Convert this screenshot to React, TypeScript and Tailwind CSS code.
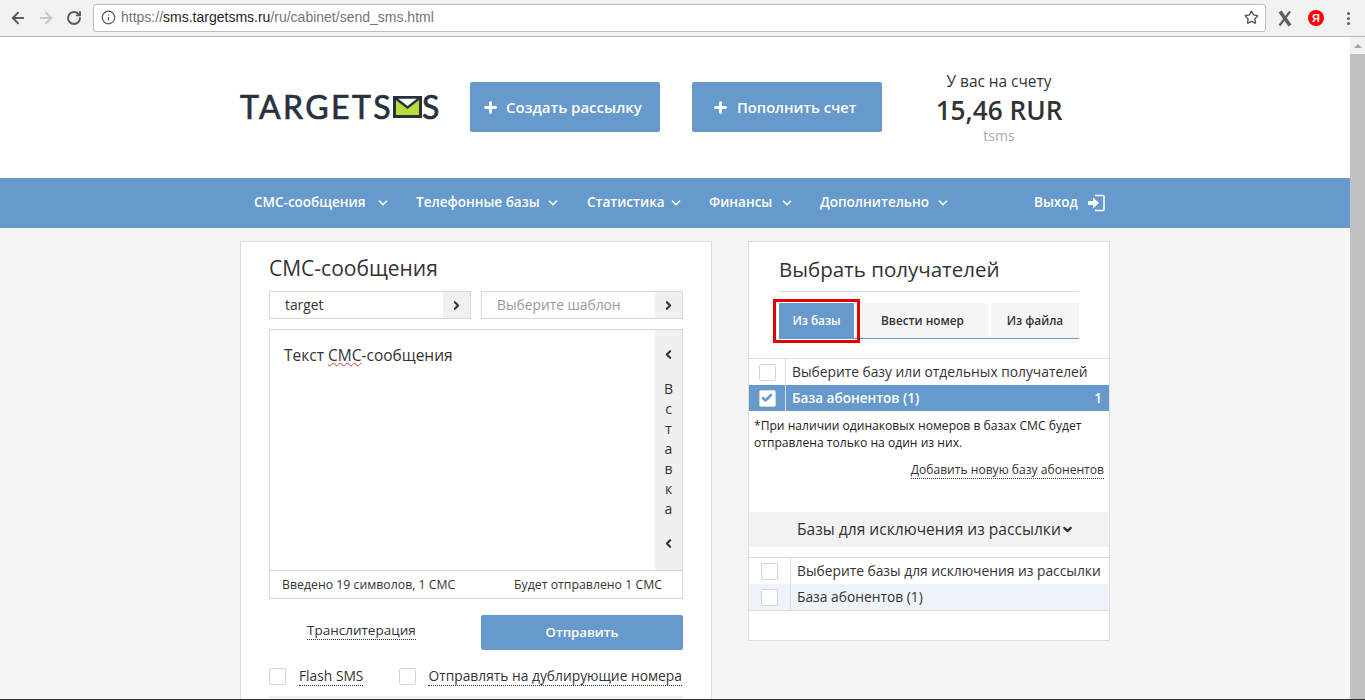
import React from 'react';
import { ArrowLeft, ArrowRight, RotateCw, Info, Star, Plus, ChevronDown, ChevronRight, ChevronLeft, Check } from 'lucide-react';

const BLUE = 'bg-[#6699cc]';

const NavItem = ({ label, className, textWidth }: any) => (
  <div className={`flex items-center ${className}`}>
    <span className={`font-semibold whitespace-nowrap ${textWidth}`}>{label}</span>
    <ChevronDown className="w-[14px] h-[14px] ml-[9px] mt-[2px]" strokeWidth={3} />
  </div>
);

const Box = ({ checked, className = '' }: any) => (
  <div className={`w-[17px] h-[17px] shrink-0 bg-white border border-[#d5d5d5] rounded-[2px] flex items-center justify-center ${className}`}>
    {checked && <Check className="w-[12px] h-[12px] text-[#6699cc]" strokeWidth={5} />}
  </div>
);

const Picker = ({ label, muted, className }: any) => (
  <div className={`h-[28px] border border-[#d8d8d8] flex items-stretch ${className}`}>
    <div className={`flex-1 pl-[15px] leading-[26px] text-[13.8px] ${muted ? 'text-[#999]' : 'text-[#333]'}`}>{label}</div>
    <div className="w-[27px] bg-[#f0f0f0] flex items-center justify-center">
      <ChevronRight className="w-[13px] h-[13px] text-[#333]" strokeWidth={4} />
    </div>
  </div>
);

const DbRow = ({ label, count, checked, tint, lineLeft }: any) => (
  <div className={`h-[26px] flex items-center ${checked ? `${BLUE} text-white font-semibold text-[13.5px]` : tint ? 'bg-[#eef3fa] text-[#333] text-[13.8px]' : 'text-[#333] text-[13.8px]'}`}>
    <div className={`${lineLeft} h-full flex items-center justify-center border-r ${checked ? 'border-[#d5e2f0]' : 'border-[#ddd]'}`}>
      <Box checked={checked} />
    </div>
    <span className="pl-[6px] flex-1 whitespace-nowrap">{label}</span>
    {count && <span className="pr-[7px]">{count}</span>}
  </div>
);

export default function App() {
  return (
    <div className="w-[1365px] h-[700px] overflow-hidden flex flex-col bg-white font-['Open_Sans',sans-serif] text-[#333]">
      {/* Browser toolbar */}
      <div className="h-[37px] shrink-0 bg-[#f2f2f2] border-b border-[#b8b8b8] flex items-center pl-[9px]">
        <ArrowLeft className="w-[18px] h-[18px] text-[#5a5a5a]" strokeWidth={2.5} />
        <ArrowRight className="w-[18px] h-[18px] ml-[10px] text-[#c8c8c8]" strokeWidth={2.5} />
        <RotateCw className="w-[16px] h-[16px] ml-[11px] text-[#5a5a5a]" strokeWidth={2.8} />
        <div className="ml-[11px] w-[1173px] h-[28px] -mt-px bg-white border border-[#bdbdbd] rounded-[3px] flex items-center pl-[7px] pr-[6px] font-['Liberation_Sans',sans-serif] text-[14px]">
          <Info className="w-[15px] h-[15px] text-[#555]" strokeWidth={2} />
          <span className="ml-[5px] text-[#757575]">https://</span>
          <span className="text-[#222]">sms.targetsms.ru</span>
          <span className="text-[#757575]">/ru/cabinet/send_sms.html</span>
          <Star className="w-[15px] h-[15px] ml-auto text-[#555]" strokeWidth={2.2} />
        </div>
        <svg className="ml-[11px]" width="16" height="17" viewBox="0 0 16 17" fill="none">
          <path d="M3 1.500L13 15.500" stroke="#5f5f5f" strokeWidth="3.600" />
          <path d="M13 1.500L2.500 15.500" stroke="#5f5f5f" strokeWidth="2.200" />
        </svg>
        <div className="ml-[15px] w-[16px] h-[16px] rounded-full bg-[#ff0000] text-white text-[11px] font-bold flex items-center justify-center font-['Liberation_Sans',sans-serif]">Я</div>
        <div className="ml-[23px] flex flex-col gap-[2px]">
          <div className="w-[3px] h-[3px] rounded-full bg-[#5f5f5f]" />
          <div className="w-[3px] h-[3px] rounded-full bg-[#5f5f5f]" />
          <div className="w-[3px] h-[3px] rounded-full bg-[#5f5f5f]" />
        </div>
      </div>

      <div className="flex-1 flex min-h-0">
        <div className="w-[1350px] shrink-0 flex flex-col bg-[#f5f5f5]">
          {/* Header */}
          <div className="h-[141px] shrink-0 bg-white pl-[240px] flex">
            <div className="w-[230px] h-full flex items-start pt-[52px]">
              <span className="font-['Lato',sans-serif] text-[32px] leading-[36px] tracking-[2.4px] text-[#26323f] [-webkit-text-stroke:0.7px_#26323f]">TARGETS</span>
              <svg className="mt-[7px] shrink-0" width="29" height="22" viewBox="0 0 29 22">
                <rect x="1.500" y="1.500" width="26" height="19" fill="#b9dc3a" stroke="#26323f" strokeWidth="3" />
                <path d="M1.500 1.500l13 10 13-10z" fill="#fff" stroke="#26323f" strokeWidth="2.400" />
              </svg>
              <span className="font-['Lato',sans-serif] text-[32px] leading-[36px] text-[#26323f] [-webkit-text-stroke:0.7px_#26323f]">S</span>
            </div>
            <div className={`mt-[45px] w-[190px] h-[50px] ${BLUE} rounded-[2px] text-white flex items-center pl-[12px] text-[15px] font-semibold`}>
              <Plus className="w-[17px] h-[17px]" strokeWidth={4} />
              <span className="ml-[7px]">Создать рассылку</span>
            </div>
            <div className={`mt-[45px] ml-[32px] w-[190px] h-[50px] ${BLUE} rounded-[2px] text-white flex items-center pl-[20px] text-[14.7px] font-semibold`}>
              <Plus className="w-[17px] h-[17px]" strokeWidth={4} />
              <span className="ml-[8px]">Пополнить счет</span>
            </div>
            <div className="ml-[35px] w-[164px] flex flex-col items-center pt-[35px]">
              <div className="text-[15.4px] leading-[20px]">У вас на счету</div>
              <div className="text-[26.2px] leading-[37px] font-semibold">15,46 RUR</div>
              <div className="text-[14px] leading-[18px] text-[#aaa] -mt-[2px]">tsms</div>
            </div>
          </div>

          {/* Nav */}
          <div className={`h-[50px] shrink-0 ${BLUE} text-white text-[13.5px] flex items-center pl-[254px] pb-[2px]`}>
            <NavItem label="СМС-сообщения" textWidth="w-[113px]" className="w-[162px]" />
            <NavItem label="Телефонные базы" textWidth="w-[121px]" className="w-[171px]" />
            <NavItem label="Статистика" textWidth="w-[73px]" className="w-[122px]" />
            <NavItem label="Финансы" textWidth="w-[62px]" className="w-[111px]" />
            <NavItem label="Дополнительно" textWidth="w-[107px]" className="w-[214px]" />
            <span className="font-semibold">Выход</span>
            <svg className="ml-[10px] mt-[2px]" width="17" height="18" viewBox="0 0 17 18" fill="none">
              <path d="M7 1.500h8a1 1 0 0 1 1 1v13a1 1 0 0 1-1 1H7" stroke="#fff" strokeWidth="1.500" />
              <path d="M0 7h5V3.500L11 9l-6 5.500V11H0z" fill="#fff" />
            </svg>
          </div>

          {/* Content */}
          <div className="flex-1 min-h-0 flex pl-[240px] pt-[13px] items-start">
            <div className="w-[472px] h-[480px] bg-white border border-[#ddd] px-[28px]">
              <div className="text-[21px] leading-[27px] mt-[13px] text-[#333]">СМС-сообщения</div>
              <div className="flex gap-[10px] mt-[9px]">
                <Picker label="target" className="w-[202px]" />
                <Picker label="Выберите шаблон" muted className="w-[202px]" />
              </div>
              <div className="mt-[10px] h-[270px] border border-[#d8d8d8] flex flex-col">
                <div className="flex-1 flex min-h-0">
                  <div className="flex-1 pl-[14px] pt-[14px] text-[15.5px] leading-[22px]">
                    Текст <span className="underline decoration-wavy decoration-[#e03030] decoration-1">СМС</span>-сообщения
                  </div>
                  <div className="w-[27px] bg-[#f0f0f0] flex flex-col items-center pt-[18px] text-[14px] leading-[20px]">
                    <ChevronLeft className="w-[13px] h-[13px]" strokeWidth={4} />
                    <div className="mt-[18px]">В</div>
                    <div>с</div>
                    <div>т</div>
                    <div>а</div>
                    <div>в</div>
                    <div>к</div>
                    <div>а</div>
                    <ChevronLeft className="w-[13px] h-[13px] mt-[18px]" strokeWidth={4} />
                  </div>
                </div>
                <div className="h-[28px] shrink-0 border-t border-[#d8d8d8] flex items-center justify-between pl-[12px] pr-[20px] pt-px text-[12.3px]">
                  <span>Введено 19 символов, 1 СМС</span>
                  <span>Будет отправлено 1 СМС</span>
                </div>
              </div>
              <div className="flex mt-[16px] items-start">
                <span className="ml-[38px] mt-[6px] text-[13.5px] leading-[18px] border-b border-dotted border-[#333]">Транслитерация</span>
                <div className={`ml-auto w-[202px] h-[35px] ${BLUE} rounded-[2px] text-white text-[13.2px] font-semibold flex items-center justify-center`}>Отправить</div>
              </div>
              <div className="flex items-center mt-[16px] text-[13.8px] leading-[18px]">
                <Box />
                <span className="ml-[13px] mt-px whitespace-nowrap border-b border-dotted border-[#333]">Flash SMS</span>
                <Box className="ml-[36px]" />
                <span className="ml-[12px] mt-px whitespace-nowrap border-b border-dotted border-[#333]">Отправлять на дублирующие номера</span>
              </div>
              <div className="mt-[10px] h-[10px] bg-[#f0f0f0]" />
            </div>

            <div className="ml-[36px] w-[362px] h-[400px] bg-white border border-[#ddd]">
              <div className="mx-[30px] h-[50px] border-b border-[#ddd] text-[20.5px] leading-[27px] pt-[14px]">Выбрать получателей</div>
              <div className="relative mx-[30px] mt-[11px] flex h-[36px] border-b border-[#6699cc] text-[11.8px] font-semibold">
                <div className={`w-[75px] ${BLUE} text-white flex items-center justify-center`}>Из базы</div>
                <div className="ml-[8px] w-[126px] bg-[#f5f5f5] flex items-center justify-center pr-[5px]">Ввести номер</div>
                <div className="ml-[3px] w-[88px] bg-[#f5f5f5] flex items-center justify-center">Из файла</div>
                <div className="absolute -left-[6px] -top-[4px] w-[87px] h-[44px] border-[3px] border-[#e60000]" />
              </div>
              <div className="mt-[19px] border-t border-[#ddd]">
                <DbRow label="Выберите базу или отдельных получателей" lineLeft="w-[37px]" />
                <DbRow label="База абонентов (1)" count="1" checked lineLeft="w-[37px]" />
              </div>
              <div className="px-[5px] pt-[6px] text-[12.1px] leading-[17px] text-[#222]">
                *При наличии одинаковых номеров в базах СМС будет<br />отправлена только на один из них.
              </div>
              <div className="flex justify-end pr-[5px] mt-[11px] text-[12.1px] leading-[16px]">
                <span className="border-b border-dotted border-[#333]">Добавить новую базу абонентов</span>
              </div>
              <div className="mt-[33px] h-[35px] bg-[#f2f2f2] flex items-center pl-[48px] text-[15.6px]">
                Базы для исключения из рассылки
                <ChevronDown className="w-[13px] h-[13px]" strokeWidth={4} />
              </div>
              <div className="mt-[10px] border-t border-b border-[#ddd]">
                <DbRow label="Выберите базы для исключения из рассылки" lineLeft="w-[42px]" />
                <DbRow label="База абонентов (1)" tint lineLeft="w-[42px]" />
              </div>
            </div>
          </div>
        </div>

        {/* Scrollbar */}
        <div className="flex-1 bg-[#f1f1f1] flex flex-col items-center">
          <div className="h-[17px] flex items-center justify-center">
            <div className="w-0 h-0 border-x-[4px] border-x-transparent border-b-[4px] border-b-[#a3a3a3]" />
          </div>
          <div className="w-full flex-1 bg-[#c1c1c1]" />
        </div>
      </div>
      <div className="h-px shrink-0 bg-[#333]" />
    </div>
  );
}
